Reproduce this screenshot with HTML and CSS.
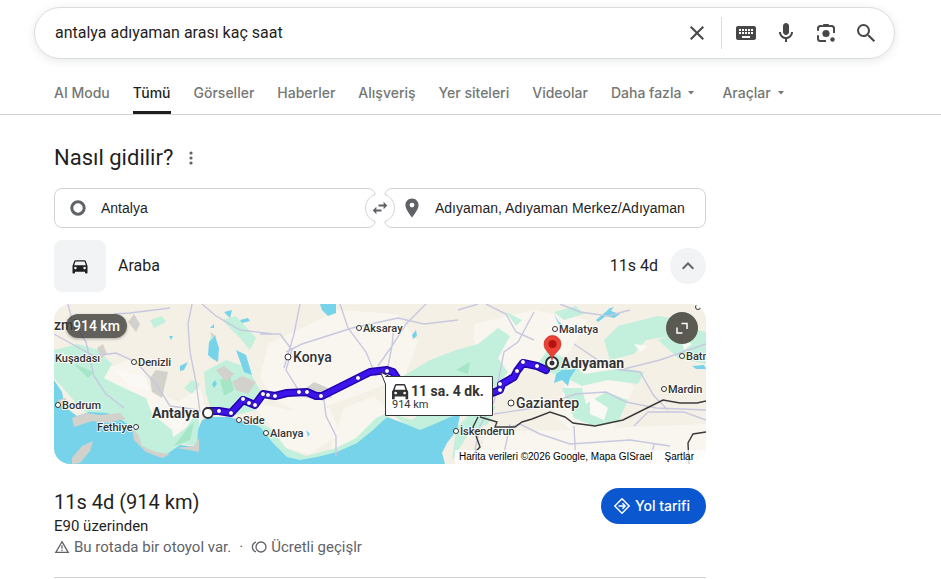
FILE: index.html
```html
<!DOCTYPE html>
<html lang="tr">
<head>
<meta charset="utf-8">
<meta name="viewport" content="width=device-width, initial-scale=1">
<title>antalya adıyaman arası kaç saat</title>
<link rel="stylesheet" href="styles.css">
</head>
<body>
<header class="top">
  <form class="search" role="search">
    <input class="search-text" type="text" aria-label="Ara" value="antalya adıyaman arası kaç saat">
    <button class="tool" type="reset" aria-label="Temizle"><svg viewBox="0 0 24 24"><path d="M19 6.41 17.59 5 12 10.59 6.41 5 5 6.41 10.59 12 5 17.59 6.41 19 12 13.41 17.59 19 19 17.59 13.41 12z"/></svg></button>
    <span class="divider"></span>
    <button class="tool" type="button" aria-label="Klavye"><svg viewBox="0 0 24 24"><path d="M20 5H4c-1.100 0-1.990.9-1.990 2L2 17c0 1.100.9 2 2 2h16c1.100 0 2-.9 2-2V7c0-1.100-.9-2-2-2zm-9 3h2v2h-2V8zm0 3h2v2h-2v-2zM8 8h2v2H8V8zm0 3h2v2H8v-2zm-1 2H5v-2h2v2zm0-3H5V8h2v2zm9 7H8v-2h8v2zm0-4h-2v-2h2v2zm0-3h-2V8h2v2zm3 3h-2v-2h2v2zm0-3h-2V8h2v2z"/></svg></button>
    <button class="tool" type="button" aria-label="Sesli arama"><svg viewBox="0 0 24 24"><path d="M12 14c1.660 0 3-1.340 3-3V5c0-1.660-1.340-3-3-3S9 3.340 9 5v6c0 1.660 1.340 3 3 3z"/><path d="M17 11c0 2.760-2.240 5-5 5s-5-2.240-5-5H5c0 3.530 2.610 6.430 6 6.920V21h2v-3.080c3.390-.49 6-3.390 6-6.920h-2z"/></svg></button>
    <button class="tool" type="button" aria-label="Görselle arama"><svg viewBox="0 0 24 24"><g fill="none" stroke="currentColor" stroke-width="2"><path d="M4 9.800V7.500a2.500 2.500 0 0 1 2.500-2.500h2M15.500 5h2A2.500 2.500 0 0 1 20 7.500V12M4 14.200v3.300A2.500 2.500 0 0 0 6.500 20H12"/></g><path d="M7.500 6 9.500 3h5l2 3z"/><circle cx="12" cy="12.500" r="3.600"/><circle cx="18.500" cy="18.500" r="2.200"/></svg></button>
    <button class="tool" type="submit" aria-label="Google'da Ara"><svg viewBox="0 0 24 24"><path d="M15.500 14h-.79l-.28-.27A6.471 6.471 0 0 0 16 9.500 6.500 6.500 0 1 0 9.500 16c1.610 0 3.090-.59 4.230-1.570l.27.28v.79l5.600 5.600 1.490-1.490L15.500 14zm-6 0C7.010 14 5 11.990 5 9.500S7.010 5 9.500 5 14 7.010 14 9.500 11.990 14 9.500 14z"/></svg></button>
  </form>
  <nav class="tabs" aria-label="Arama türleri">
    <a href="#">AI Modu</a>
    <a href="#" class="active" aria-current="page">Tümü</a>
    <a href="#">Görseller</a>
    <a href="#">Haberler</a>
    <a href="#">Alışveriş</a>
    <a href="#">Yer siteleri</a>
    <a href="#">Videolar</a>
    <button type="button">Daha fazla <svg viewBox="0 0 8 4"><path d="M1 0h6L4 3.500z"/></svg></button>
    <button type="button">Araçlar <svg viewBox="0 0 8 4"><path d="M1 0h6L4 3.500z"/></svg></button>
  </nav>
</header>

<main class="directions">
  <div class="heading">
    <h1>Nasıl gidilir?</h1>
    <button class="more" type="button" aria-label="Bu sonuç hakkında"><svg viewBox="0 0 4 14"><circle cx="2" cy="2" r="1.600"/><circle cx="2" cy="7" r="1.600"/><circle cx="2" cy="12" r="1.600"/></svg></button>
  </div>

  <div class="places">
    <label class="place">
      <svg viewBox="0 0 24 24" aria-hidden="true"><circle cx="12" cy="12" r="6.200" fill="none" stroke="currentColor" stroke-width="3"/></svg>
      <input type="text" aria-label="Başlangıç noktası" value="Antalya">
    </label>
    <button class="swap" type="button" aria-label="Yer değiştir">
      <svg viewBox="0 0 30 30"><path class="arc" d="M10.500 1.200a14.500 14.500 0 0 0 0 27.600M19.500 1.200a14.500 14.500 0 0 1 0 27.600"/><path d="M18.600 8.800v2.700h-5.100v2h5.100v2.700l3.700-3.700zM11.400 13.800v2.700h5.100v2h-5.100v2.700l-3.700-3.700z"/></svg>
    </button>
    <label class="place">
      <svg viewBox="0 0 24 24" aria-hidden="true"><path d="M12 2.500c-3.800 0-6.600 2.900-6.600 6.600 0 4.800 6.600 12.400 6.600 12.400s6.600-7.600 6.600-12.400c0-3.700-2.800-6.600-6.600-6.600zm0 9a2.400 2.400 0 1 1 0-4.800 2.400 2.400 0 0 1 0 4.800z"/></svg>
      <input type="text" aria-label="Varış noktası" value="Adıyaman, Adıyaman Merkez/Adıyaman">
    </label>
  </div>

  <div class="mode">
    <span class="mode-icon"><svg viewBox="0 0 24 24"><path d="M18.920 6.010C18.720 5.420 18.160 5 17.500 5h-11c-.66 0-1.210.42-1.420 1.010L3 12v8c0 .55.45 1 1 1h1c.55 0 1-.45 1-1v-1h12v1c0 .55.45 1 1 1h1c.55 0 1-.45 1-1v-8l-2.080-5.990zM6.500 16c-.83 0-1.500-.67-1.500-1.500S5.670 13 6.500 13s1.500.67 1.500 1.500S7.330 16 6.500 16zm11 0c-.83 0-1.500-.67-1.500-1.500s.67-1.500 1.500-1.500 1.500.67 1.500 1.500-.67 1.500-1.500 1.500zM5 11l1.500-4.500h11L19 11H5z"/></svg></span>
    <span class="mode-name">Araba</span>
    <span>11s 4d</span>
    <button class="collapse" type="button" aria-label="Daralt"><svg viewBox="0 0 24 24"><path d="m12 8-6 6 1.410 1.410L12 10.830l4.590 4.580L18 14z"/></svg></button>
  </div>

  <div class="map">
    <svg class="map-art" viewBox="0 0 652 160" preserveAspectRatio="xMidYMid slice" role="img" aria-label="Antalya ile Adıyaman arasındaki rota">
      <rect width="652" height="160" fill="#f4f0e6"/>
      <!-- pale uplands -->
      <g fill="#f9f6f0">
        <path d="M54 64l20-8 14 8 10 24 26 10 22-14 6 20-10 22-34 20-20-16-16-28-24-18z"/>
        <path d="M214 40l30-14 40-20 60 4 20 28-14 36-60 22-40 14-30-14-14-22z"/>
        <path d="M196 98l40 8 40-2 10 26-30 20-24-6-18-26z"/>
        <path d="M420 20l60-14 54 10-20 34-40 10-24 30-28-12z"/>
        <path d="M432 128l80-2 140-6v40H424z"/>
        <path d="M520 60l40 4 20 20-20 40-40 6-20-20z"/>
        <path d="M290 104l30-12 14 14-34 34-24 6z"/>
      </g>
      <!-- forests -->
      <g fill="#c2f0dc">
        <path d="M0 46l24-6 20 6 14 14-8 14 20 10 22 10 6 16 20 16 2 14-14 14-18-6-10-24-18-12-20 2-14-10-10-12L0 74z"/>
        <path d="M96 130l22 4 14-10 12-18 2 20-4 16-14-2-12 10-16-2z"/>
        <path d="M150 68l22-12 22 8 16 30-8 12-24 6-20-4-6-18z"/>
        <path d="M168 16l14-4 20 22-6 12-10-12z"/>
        <path d="M156 32l8 10-2 14-6-2z"/>
        <path d="M130 84l8-8 8 4-8 10zM96 16l12-4 4 6-12 6z"/>
        <path d="M196 114l20 10 16 20 20 8 30-8 20-10 20-20 14-6-20 28-30 16-40 8-18-4-16-24z"/>
        <path d="M346 74l30-18 26-10 22-6 20-16 12 8-12 22 10 14-12 16-10-6-18 14-30 10-30 6z"/>
        <path d="M338 110l20 6 10-8 26-2 12 4-22 14-20 6z"/>
        <path d="M402 124l16-16 24-6-8 18-18 8-18 28z"/>
        <path d="M480 64l14-18 20 10 16 14 40-6 20 4-6 12-30-4-26 6-20-10z"/>
        <path d="M508 84l20 0 4 16 20-12 22 8-10 22-24 4-20-8z"/>
        <path d="M550 36l14-14 40-10 26 4-14 16-24 4-12 14-24 6z"/>
        <path d="M604 36l30-12 18 4v32l-28-6z"/>
        <path d="M500 8l22-6 8 8-20 6zM452 8l16 8-6 6z"/>
      </g>
      <g fill="#a4e6c5"><path d="M120 142l14-18 6-6-4 18zM166 76l10-4 4 14-10 6zM20 60l20 8-6 6zM360 82l24-8-10 12zM402 66l14-8-2 12z"/></g>
      <g fill="#fbf9f5"><path d="M60 66l30 6 6 14-20-4zM536 92l18 12-4 12-14-6zM112 118l16-8 8 4-14 12zM580 40l14 2-8 6zM628 36l10 4-8 6z"/></g>
      <g fill="#d3d1cb">
        <path d="M96 74l6-8 12 2-6 26-10-6zM162 66l8-4 10 8-8 8zM178 78l10-6 14 6-8 12-12-4zM252 84l8-6 14 6 4 10-16-2zM74 18l6-8 6 10-4 8zM43 44l6-4 4 10-6 4zM156 28l6 4-2 6z"/>
      </g>
      <!-- sea -->
      <path fill="#77d3e9" d="M0 76l8 12 3 15 12 9 12-4 18 1 15 7 11 8 5 15 12 9 17 2 13-9 17 2 1-17 4-10 8-3 20 0 20 6 10 4 13 16 14 14 13 3 17-3 20-5 20-9 16-13 14-13 16 6 17 7 17-7 13-6 10-2-3 15-10 13-5 10 3 11H0z"/>
      <g fill="#d3d1cb">
        <path d="M18 114l14-5 14 2 20-2 6 6-20 4-14-2-18 6z"/><path d="M18 154l10-12 11-5-3 10-10 12-8 1z"/><path d="M4 96l8-2 1 6-7 3z"/>
        <path d="M78 124l6 6 4 12 14 6 14 2-8 4-16-6-12-12zM122 144l18-2 5-8v14l-10-2z"/>
      </g>
      <!-- lakes -->
      <g fill="#77d3e9">
        <path d="M155 38l6-6 4 12-1 14-5-3-5-4z"/><path d="M182 46l10 5 6 20-8-3z"/><path d="M170 8l8-2-2 8zM186 16l8-2 2 3-8 2zM126 62l8-4-4 8-4 1zM158 80l3-4 2 4-3 4zM115 32l4 0-2 4zM156 24l4-4 0 4z"/>
        <path d="M266 0h16v9l-8 3-6-6zM358 31l4-5 1 6-4 3zM252 126l4 4-2 3z"/>
        <path d="M502 70l6-4 10 0 6-4-8 12-2 8-6-6-8 3z"/><path d="M542 16l12-10 12 4-6 4-8-2-8 6zM500 10l5 8 6 4-6-1zM554 5l6-2-4 5zM638 62l12-1 2 4-10 0z"/>
      </g>
      <!-- roads -->
      <g fill="none" stroke="#c8c8df" stroke-width="1.400">
        <path d="M14 0l4 16 14 22 8 34 12 18 18 14M0 30l40 22 22-3 20 9 20 22 14 22 28 4M138 0l-4 20 2 28 6 30 4 30M116 4L76 9 60 10M148 0l14 12 24 14 34 4M246 0l-6 30-10 34M206 30l20 0 12 16-6 20 16 26 22 4 2 16 10 20 0 20"/>
        <path d="M286 0l8 24 18 24 10 24M232 48l16-8 50-16 46-10 26 6 34-4M372 0l-20 20-14 22-6 30M340 22l-2 20-14 20M404 6l20-6M432 0l20 10 10 18 18 8M506 0l20 8 28 4 22-6M480 8l-16 30-14 10-10 50-14 24-8 38"/>
        <path d="M440 110l40-6 42-14 30-2 20 10 30 6 50 2M520 40l30 20 16 6 40-10 46-16M566 66l20 2 14 24 14 14M580 122l14-14 36 0 22 8M436 130l30-10 20 10 30 10 60-4 40 6M520 122l2 38M456 120l-8 40M600 140l-4 20"/>
      </g>
      <g fill="none" stroke="#3b3b3b" stroke-width="1.400"><path d="M652 97l-9 2-17 0-17-3-16 8-24 12-28 6-22-3-8-6-15-5-18 7-10 3-7 5-20 0 2-5-17-5M424 113l-5 10 7 20-6 6M652 128l-13 2-5 9 1 21"/></g>
      <!-- route -->
      <g fill="none" stroke-linecap="round" stroke-linejoin="round">
        <path stroke="#2304ac" stroke-width="8" d="M154 107L165 107 177 109 189 96 201 101 209 90 221 92 233 89 253 88 262 92 268 92 304 74 316 68 333 66 339 68 343 74M438 89L446 86 448 80 460 73 463 67 469 59 483 62 492 66"/>
        <path stroke="#3d13ee" stroke-width="5" d="M154 107L165 107 177 109 189 96 201 101 209 90 221 92 233 89 253 88 262 92 268 92 304 74 316 68 333 66 339 68 343 74M438 89L446 86 448 80 460 73 463 67 469 59 483 62 492 66"/>
      </g>
      <g fill="#fff" stroke="#2304ac" stroke-width="1"><circle cx="165" cy="107" r="2.500"/><circle cx="177" cy="109" r="2.500"/><circle cx="189" cy="95" r="2.500"/><circle cx="195" cy="99" r="2.500"/><circle cx="201" cy="101" r="2.500"/><circle cx="209" cy="90" r="2.500"/><circle cx="214" cy="91" r="2.500"/><circle cx="221" cy="92" r="2.500"/><circle cx="245" cy="88" r="2.500"/><circle cx="253" cy="88" r="2.500"/><circle cx="267" cy="92" r="2.500"/><circle cx="304" cy="74" r="2.500"/><circle cx="333" cy="67" r="2.500"/><circle cx="446" cy="86" r="2.500"/><circle cx="446" cy="80" r="2.500"/><circle cx="463" cy="67" r="2.500"/><circle cx="469" cy="58" r="2.500"/><circle cx="483" cy="62" r="2.500"/></g>
      <!-- towns -->
      <g class="dots"><circle cx="80" cy="58" r="2.500"/><circle cx="4" cy="101" r="2.500"/><circle cx="82" cy="123" r="2.500"/><circle cx="185" cy="116" r="2.500"/><circle cx="212" cy="129" r="2.500"/><circle cx="234" cy="53" r="3"/><circle cx="305" cy="24" r="2.500"/><circle cx="402" cy="127" r="2.500"/><circle cx="457" cy="99" r="3"/><circle cx="501" cy="25" r="2.500"/><circle cx="628" cy="52" r="2.500"/><circle cx="610" cy="85" r="2.500"/><circle cx="644" cy="3" r="2.500"/></g>
      <g class="labels">
        <text class="city" x="-4" y="26">İzmir</text>
        <text x="1" y="58">Kuşadası</text><text x="84" y="62">Denizli</text><text x="8" y="105">Bodrum</text><text x="43" y="127">Fethiye</text><text x="189" y="120">Side</text><text x="216" y="133">Alanya</text><text x="309" y="28">Aksaray</text><text x="406" y="131">İskenderun</text><text x="505" y="29">Malatya</text><text x="632" y="56">Batman</text><text x="614" y="89">Mardin</text>
        <text class="city" x="239" y="58">Konya</text><text class="city" x="462" y="104">Gaziantep</text>
        <text class="city end" x="98" y="114">Antalya</text><text class="city end" x="507" y="64">Adıyaman</text>
      </g>
      <g fill="#fff" stroke="#333" stroke-width="2"><circle cx="154" cy="109" r="5"/><circle cx="498" cy="59" r="6"/></g>
      <circle cx="498" cy="59" r="2.500" fill="#333"/>
      <path fill="#ea4335" stroke="#c5221f" stroke-width=".6" d="M498 56c-1-7-8-9-8-16a8.500 8.500 0 0 1 17 0c0 7-8 9-9 16z"/><circle cx="498.500" cy="40" r="4" fill="#b31412"/>
      <!-- route summary -->
      <path fill="#fff" stroke="#333" d="M331.500 72.500h107v39h-107V80l-5-12 9 4.500z"/>
      <g fill="#333" transform="translate(338 80) scale(.9)"><path fill-rule="evenodd" d="M3 1.500C3.400.5 4 0 5 0h8c1 0 1.600.5 2 1.500L17 7c.7.500 1 1 1 2v8h-3v-3H3v3H0V9c0-1 .3-1.500 1-2zm1.600.3L3 6.300h12l-1.600-4.500zM4 8.500a1.500 1.500 0 1 0 .1 0zm10 0a1.500 1.500 0 1 0 .1 0z"/></g>
      <text class="trip-time" x="357" y="92">11 sa. 4 dk.</text>
      <text class="trip-length" x="338" y="104">914 km</text>
    </svg>
    <span class="distance">914 km</span>
    <button class="expand" type="button" aria-label="Haritayı genişlet"><svg viewBox="0 0 16 16"><path fill="none" stroke="currentColor" stroke-width="1.500" d="M7.500 3.500h5.500V9M3 7.500V13h5.500"/></svg></button>
    <p class="credits"><span>Harita verileri ©2026 Google, Mapa GISrael</span><a href="#">Şartlar</a></p>
  </div>

  <section class="summary">
    <div>
      <h2>11s 4d (914 km)</h2>
      <p class="via">E90 üzerinden</p>
      <p class="notes">
        <svg viewBox="0 0 16 16"><path fill="none" stroke="currentColor" stroke-width="1.300" d="M8 2.700 14.200 13.400H1.800zM8 6.300v3.500M8 10.800v1.300"/></svg>
        <span>Bu rotada bir otoyol var.</span>
        <span class="sep">·</span>
        <svg viewBox="0 0 16 16"><g fill="none" stroke="currentColor" stroke-width="1.300"><circle cx="10" cy="8" r="5"/><path d="M5 3.200a5 5 0 0 0 0 9.600"/></g></svg>
        <span>Ücretli geçişlr</span>
      </p>
    </div>
    <a class="go" href="#"><svg viewBox="0 0 18 18"><path fill="none" stroke="currentColor" stroke-width="1.500" stroke-linejoin="round" d="M9 1.800 16.200 9 9 16.200 1.800 9zM5.500 9h6.500M9.400 6.200 12.200 9l-2.800 2.800"/></svg>Yol tarifi</a>
  </section>
</main>
</body>
</html>
```

FILE: styles.css
```css
* { box-sizing: border-box; }
body { margin: 0; background: #fff; color: #1f1f1f; font-family: Roboto, "Liberation Sans", sans-serif; font-size: 14px; line-height: 20px; }
h1, h2, p { margin: 0; font-weight: 400; }
button, input { font: inherit; color: inherit; border: 0; background: none; padding: 0; }
button { cursor: pointer; }
a { color: inherit; text-decoration: none; }
svg { display: block; fill: currentColor; flex: none; }

.top { padding-top: 7px; border-bottom: 1px solid #d2d2d2; }
.search { display: flex; align-items: center; height: 52px; max-width: 861px; margin: 0 46px 0 34px; padding: 0 8px 0 20px; border: 1px solid #dadce0; border-radius: 26px; box-shadow: 0 2px 8px rgba(60, 64, 67, .12); }
.search-text { flex: 1; min-width: 0; font-size: 16px; outline: 0; }
.tool { width: 40px; height: 40px; display: grid; place-items: center; color: #474747; }
.tool svg { width: 24px; height: 24px; }
.divider { width: 1px; height: 32px; margin: 0 4px; background: #dadce0; }

.tabs { display: flex; gap: 23px; padding: 24px 54px 0; color: #747775; font-family: Inter, Roboto, sans-serif; font-size: 14px; font-weight: 500; white-space: nowrap; }
.tabs a, .tabs button { display: flex; align-items: center; gap: 6px; padding-bottom: 8px; border-bottom: 3px solid transparent; }
.tabs .active { color: #1f1f1f; border-color: #1f1f1f; }
.tabs svg { width: 8px; height: 4px; margin-right: 4px; }

.directions { display: flex; flex-direction: column; gap: 12px; max-width: 706px; padding: 27px 0 0 54px; }
.heading { display: flex; align-items: center; gap: 14px; height: 32px; margin-bottom: 2px; }
.heading h1 { font-size: 22px; line-height: 28px; }
.more { width: 8px; display: grid; place-items: center; color: #5f6368; }
.more svg { width: 4px; height: 14px; }

.places { display: grid; grid-template-columns: minmax(0, 1fr) 8px minmax(0, 1fr); align-items: center; justify-items: center; }
.place { width: 100%; height: 40px; display: flex; align-items: center; gap: 11px; padding: 0 11px; border: 1px solid #d2d2d2; border-radius: 8px; color: #5f6368; }
.place svg { width: 24px; height: 24px; }
.place input { flex: 1; min-width: 0; font-family: "Liberation Sans", sans-serif; color: #1f1f1f; outline: 0; }
.swap + .place { padding-left: 15px; }
.swap { position: relative; width: 30px; height: 30px; margin: 0 -11px; border-radius: 50%; background: #fff; color: #5f6368; }
.swap svg { width: 30px; height: 30px; }
.arc { fill: none; stroke: #d2d2d2; }

.mode { display: flex; align-items: center; gap: 12px; font-size: 16px; }
.mode-icon { width: 52px; height: 52px; display: grid; place-items: center; border-radius: 8px; background: #f1f3f4; }
.mode-icon svg { width: 20px; height: 20px; }
.mode-name { flex: 1; }
.collapse { width: 36px; height: 36px; display: grid; place-items: center; border-radius: 50%; background: #f1f3f4; color: #5f6368; }
.collapse svg { width: 24px; height: 24px; }

.map { position: relative; overflow: hidden; border-radius: 16px; font-weight: 500; }
.map-art { width: 100%; height: auto; }
.labels text { font-size: 11px; fill: #333; stroke: #fff; stroke-width: 2px; stroke-opacity: .8; paint-order: stroke; }
.labels .city { font-size: 14px; }
.labels .end { font-weight: 700; }
.dots circle { fill: #fff; stroke: #333; stroke-width: 1px; }
.trip-time { font-size: 14px; font-weight: 700; fill: #333; }
.trip-length { font-size: 11px; font-weight: 400; fill: #333; }
.distance { position: absolute; top: 10px; left: 12px; padding: 2px 7px; border-radius: 12px; background: rgba(60, 60, 55, .8); color: #fff; box-shadow: 0 1px 3px rgba(0, 0, 0, .3); }
.expand { position: absolute; top: 8px; right: 8px; width: 32px; height: 32px; display: grid; place-items: center; border-radius: 50%; background: #5b5a52; color: #fff; }
.expand svg { width: 16px; height: 16px; }
.credits { position: absolute; right: 0; bottom: 0; display: flex; gap: 12px; padding: 0 12px 0 4px; background: rgba(255, 255, 255, .75); font: 10px/14px "Liberation Sans", sans-serif; color: #000; }

.summary { display: flex; justify-content: space-between; align-items: flex-start; margin-top: 12px; padding-bottom: 19px; border-bottom: 1px solid #d2d2d2; }
.summary h2 { font-size: 20px; line-height: 28px; }
.via { font-size: 15px; }
.notes { display: flex; align-items: center; gap: 4px; font-size: 15px; line-height: 22px; color: #5f6368; }
.notes svg { width: 16px; height: 16px; }
.sep { margin: 0 4px; }
.go { display: flex; align-items: center; gap: 4px; height: 36px; padding: 0 16px 0 12px; border-radius: 18px; background: #0b57d0; color: #fff; font-family: Inter, Roboto, sans-serif; font-size: 14px; font-weight: 500; white-space: nowrap; }
.go svg { width: 18px; height: 18px; }
```
